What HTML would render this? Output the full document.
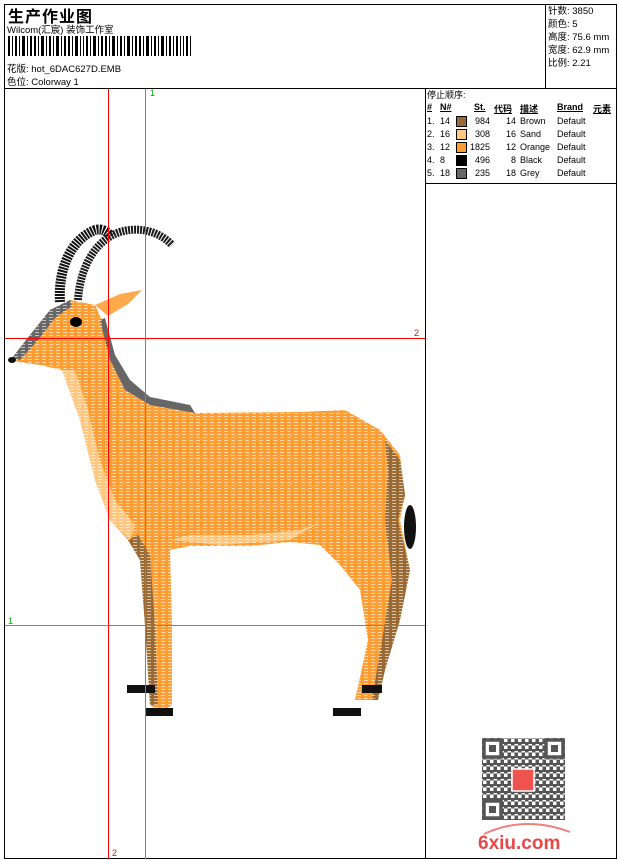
<!DOCTYPE html>
<html><head><meta charset="utf-8"><style>
html,body{margin:0;padding:0;background:#fff;}
body{width:620px;height:860px;position:relative;overflow:hidden;font-family:"Liberation Sans","Noto Sans CJK SC",sans-serif;color:#000;}
.a{position:absolute;white-space:nowrap;}
.s{font-size:9.5px;}
.r{position:absolute;font-size:9px;white-space:nowrap;}
.sw{position:absolute;width:9px;height:9px;border:1px solid #000;}
</style></head><body>
<svg width="620" height="860" style="position:absolute;left:0;top:0">
<defs>
<pattern id="h" width="7" height="3" patternUnits="userSpaceOnUse"><rect x="0" y="2" width="4" height="1" fill="#fff" opacity="0.6"/></pattern>
<mask id="m"><polygon points="12,358 30,335 50,310 70,300 95,305 102,320 110,360 125,390 150,405 195,413 300,412 345,410 380,430 400,455 405,495 400,520 410,570 400,620 385,670 378,700 355,700 368,640 360,590 340,565 320,545 290,542 250,546 190,546 170,550 172,625 172,705 160,712 150,705 145,625 140,560 128,540 110,520 95,480 80,420 62,370 40,365 18,362" fill="#fff"/></mask>
</defs>
<rect x="4.5" y="4.5" width="612" height="854" fill="none" stroke="#000"/>
<line x1="4" y1="88.5" x2="617" y2="88.5" stroke="#000"/>
<line x1="545.5" y1="4" x2="545.5" y2="88" stroke="#000"/>
<line x1="425.5" y1="88" x2="425.5" y2="859" stroke="#000"/>
<line x1="425" y1="183.5" x2="617" y2="183.5" stroke="#000"/>
<g fill="#000">
<rect x="8" y="36" width="2" height="20"/><rect x="12" y="36" width="1" height="20"/><rect x="15" y="36" width="2" height="20"/><rect x="19" y="36" width="1" height="20"/><rect x="22" y="36" width="3" height="20"/><rect x="27" y="36" width="1" height="20"/><rect x="30" y="36" width="2" height="20"/><rect x="34" y="36" width="2" height="20"/><rect x="38" y="36" width="1" height="20"/><rect x="41" y="36" width="3" height="20"/><rect x="46" y="36" width="1" height="20"/><rect x="49" y="36" width="2" height="20"/><rect x="53" y="36" width="1" height="20"/><rect x="56" y="36" width="3" height="20"/><rect x="61" y="36" width="1" height="20"/><rect x="64" y="36" width="2" height="20"/><rect x="68" y="36" width="2" height="20"/><rect x="72" y="36" width="1" height="20"/><rect x="75" y="36" width="3" height="20"/><rect x="80" y="36" width="1" height="20"/><rect x="83" y="36" width="1" height="20"/><rect x="86" y="36" width="2" height="20"/><rect x="90" y="36" width="1" height="20"/><rect x="93" y="36" width="3" height="20"/><rect x="98" y="36" width="1" height="20"/><rect x="101" y="36" width="2" height="20"/><rect x="105" y="36" width="2" height="20"/><rect x="109" y="36" width="1" height="20"/><rect x="112" y="36" width="3" height="20"/><rect x="117" y="36" width="1" height="20"/><rect x="120" y="36" width="2" height="20"/><rect x="124" y="36" width="1" height="20"/><rect x="127" y="36" width="3" height="20"/><rect x="132" y="36" width="1" height="20"/><rect x="135" y="36" width="2" height="20"/><rect x="139" y="36" width="2" height="20"/><rect x="143" y="36" width="1" height="20"/><rect x="146" y="36" width="3" height="20"/><rect x="151" y="36" width="1" height="20"/><rect x="154" y="36" width="2" height="20"/><rect x="158" y="36" width="1" height="20"/><rect x="161" y="36" width="3" height="20"/><rect x="166" y="36" width="1" height="20"/><rect x="169" y="36" width="2" height="20"/><rect x="173" y="36" width="1" height="20"/><rect x="176" y="36" width="2" height="20"/><rect x="180" y="36" width="1" height="20"/><rect x="183" y="36" width="1" height="20"/><rect x="186" y="36" width="2" height="20"/><rect x="190" y="36" width="1" height="20"/>
</g>
<g>
<path d="M60 302 C58 270 70 240 95 230 C102 228 108 232 110 236" stroke="#111" stroke-width="10" fill="none" stroke-dasharray="2 1"/>
<path d="M78 300 C80 268 95 240 120 232 C140 226 160 232 172 245" stroke="#1a1a1a" stroke-width="8" fill="none" stroke-dasharray="2 1"/>
<polygon points="12,358 30,335 50,310 70,300 95,305 102,320 110,360 125,390 150,405 195,413 300,412 345,410 380,430 400,455 405,495 400,520 410,570 400,620 385,670 378,700 355,700 368,640 360,590 340,565 320,545 290,542 250,546 190,546 170,550 172,625 172,705 160,712 150,705 145,625 140,560 128,540 110,520 95,480 80,420 62,370 40,365 18,362" fill="#ff9d33"/>
<polygon points="62,370 80,420 95,480 110,520 130,540 135,525 115,500 100,460 88,410 75,370" fill="#ffc77f"/>
<polygon points="170,540 220,545 290,540 320,522 300,530 250,535 190,535" fill="#ffc77f"/>
<polygon points="128,540 140,560 145,625 150,705 158,705 155,625 150,555 138,535" fill="#9a6a35"/>
<polygon points="385,440 400,460 405,495 398,520 410,570 400,620 385,670 378,700 372,700 382,640 392,580 385,520 388,470" fill="#9a6a35"/>
<polygon points="100,320 110,360 125,390 150,405 195,413 190,405 150,397 130,380 115,355 105,318" fill="#666"/>
<polygon points="12,358 30,335 50,310 70,300 72,306 55,318 38,340 20,360" fill="#666"/>
<polygon points="95,305 120,294 142,290 128,304 108,316" fill="#ffa94d"/>
<rect x="0" y="280" width="420" height="440" fill="url(#h)" mask="url(#m)"/>
<ellipse cx="76" cy="322" rx="6" ry="5" fill="#000"/>
<ellipse cx="12" cy="360" rx="4" ry="3" fill="#111"/>
<ellipse cx="410" cy="527" rx="6" ry="22" fill="#111"/>
<rect x="127" y="685" width="28" height="8" fill="#111"/>
<rect x="145" y="708" width="28" height="8" fill="#111"/>
<rect x="362" y="685" width="20" height="8" fill="#111"/>
<rect x="333" y="708" width="28" height="8" fill="#111"/>
</g>
<line x1="108.5" y1="89" x2="108.5" y2="859" stroke="#f00"/>
<line x1="5" y1="338.5" x2="425" y2="338.5" stroke="#f00"/>
<line x1="145.5" y1="89" x2="145.5" y2="859" stroke="#0d0"/>
<line x1="5" y1="625.5" x2="425" y2="625.5" stroke="#0d0"/>
<text x="150" y="96" font-size="9" fill="#0a0" font-family="Liberation Sans">1</text>
<text x="8" y="624" font-size="9" fill="#0a0" font-family="Liberation Sans">1</text>
<text x="414" y="336" font-size="9" fill="#f00" font-family="Liberation Sans">2</text>
<text x="112" y="856" font-size="9" fill="#f00" font-family="Liberation Sans">2</text>
<defs><pattern id="q" width="7" height="7" patternUnits="userSpaceOnUse"><rect width="3.5" height="3.5" fill="#555"/><rect x="3.5" y="3.5" width="3.5" height="3.5" fill="#555"/><rect x="3.5" y="0" width="3.5" height="2" fill="#555"/></pattern></defs>
<rect x="482" y="738" width="83" height="82" fill="url(#q)"/>
<g fill="#fff" stroke="#555" stroke-width="3.5">
<rect x="484" y="740" width="17" height="17"/><rect x="546" y="740" width="17" height="17"/><rect x="484" y="801" width="17" height="17"/>
</g>
<g fill="#555"><rect x="489" y="745" width="7" height="7"/><rect x="551" y="745" width="7" height="7"/><rect x="489" y="806" width="7" height="7"/></g>
<rect x="512" y="769" width="22" height="22" fill="#ef5350" stroke="#fff" stroke-width="1.5"/>
<path d="M484 834 Q525 815 570 832" stroke="#f08080" stroke-width="2" fill="none"/>
<text x="478" y="849" font-size="19" font-weight="bold" fill="#e8484a" font-family="Liberation Sans">6xiu.com</text>
</svg>
<div class="a" style="left:8px;top:3px;font-size:16px;font-weight:bold;letter-spacing:1px">生产作业图</div>
<div class="a s" style="left:7px;top:22px">Wilcom(汇宸) 装饰工作室</div>
<div class="a s" style="left:7px;top:61px">花版: hot_6DAC627D.EMB</div>
<div class="a s" style="left:7px;top:74px">色位: Colorway 1</div>
<div class="a s" style="left:548px;top:5px;line-height:13px">针数: 3850<br>颜色: 5<br>高度: 75.6 mm<br>宽度: 62.9 mm<br>比例: 2.21</div>
<div class="r" style="left:427px;top:88px">停止顺序:</div>
<div class="r" style="left:427px;top:102px;font-weight:bold;text-decoration:underline">#</div>
<div class="r" style="left:440px;top:102px;font-weight:bold;text-decoration:underline">N#</div>
<div class="r" style="left:474px;top:102px;font-weight:bold;text-decoration:underline">St.</div>
<div class="r" style="left:494px;top:102px;font-weight:bold;text-decoration:underline">代码</div>
<div class="r" style="left:520px;top:102px;font-weight:bold;text-decoration:underline">描述</div>
<div class="r" style="left:557px;top:102px;font-weight:bold;text-decoration:underline">Brand</div>
<div class="r" style="left:593px;top:102px;font-weight:bold;text-decoration:underline">元素</div>

<div class="r" style="left:427px;top:116px">1.</div><div class="r" style="left:440px;top:116px">14</div><div class="sw" style="left:456px;top:116px;background:#9a6a35"></div><div class="r" style="left:470px;top:116px;width:20px;text-align:right">984</div><div class="r" style="left:496px;top:116px;width:20px;text-align:right">14</div><div class="r" style="left:520px;top:116px">Brown</div><div class="r" style="left:557px;top:116px">Default</div>
<div class="r" style="left:427px;top:129px">2.</div><div class="r" style="left:440px;top:129px">16</div><div class="sw" style="left:456px;top:129px;background:#ffc77f"></div><div class="r" style="left:470px;top:129px;width:20px;text-align:right">308</div><div class="r" style="left:496px;top:129px;width:20px;text-align:right">16</div><div class="r" style="left:520px;top:129px">Sand</div><div class="r" style="left:557px;top:129px">Default</div>
<div class="r" style="left:427px;top:142px">3.</div><div class="r" style="left:440px;top:142px">12</div><div class="sw" style="left:456px;top:142px;background:#ff9d33"></div><div class="r" style="left:468px;top:142px;width:22px;text-align:right">1825</div><div class="r" style="left:496px;top:142px;width:20px;text-align:right">12</div><div class="r" style="left:520px;top:142px">Orange</div><div class="r" style="left:557px;top:142px">Default</div>
<div class="r" style="left:427px;top:155px">4.</div><div class="r" style="left:440px;top:155px">8</div><div class="sw" style="left:456px;top:155px;background:#000"></div><div class="r" style="left:470px;top:155px;width:20px;text-align:right">496</div><div class="r" style="left:496px;top:155px;width:20px;text-align:right">8</div><div class="r" style="left:520px;top:155px">Black</div><div class="r" style="left:557px;top:155px">Default</div>
<div class="r" style="left:427px;top:168px">5.</div><div class="r" style="left:440px;top:168px">18</div><div class="sw" style="left:456px;top:168px;background:#666"></div><div class="r" style="left:470px;top:168px;width:20px;text-align:right">235</div><div class="r" style="left:496px;top:168px;width:20px;text-align:right">18</div><div class="r" style="left:520px;top:168px">Grey</div><div class="r" style="left:557px;top:168px">Default</div>
</body></html>
